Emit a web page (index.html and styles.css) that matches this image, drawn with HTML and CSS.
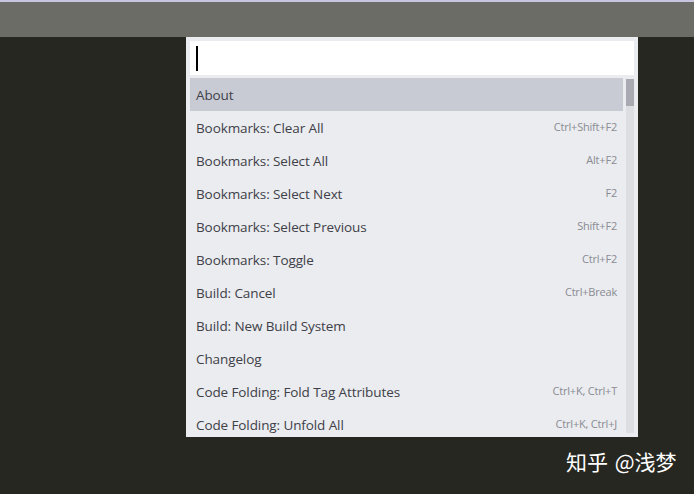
FILE: index.html
```html
<!DOCTYPE html>
<html>
<head>
<meta charset="utf-8">
<link rel="stylesheet" href="styles.css">
</head>
<body>
<div class="topline"></div>
<div class="topbar"></div>
<div class="stage">
  <div class="palette">
    <div class="input"><span class="caret"></span></div>
    <div class="listwrap">
      <div class="list">
        <div class="row selected"><span class="name">About</span></div>
        <div class="row"><span class="name">Bookmarks: Clear All</span><span class="key">Ctrl+Shift+F2</span></div>
        <div class="row"><span class="name">Bookmarks: Select All</span><span class="key">Alt+F2</span></div>
        <div class="row"><span class="name">Bookmarks: Select Next</span><span class="key">F2</span></div>
        <div class="row"><span class="name">Bookmarks: Select Previous</span><span class="key">Shift+F2</span></div>
        <div class="row"><span class="name">Bookmarks: Toggle</span><span class="key">Ctrl+F2</span></div>
        <div class="row"><span class="name">Build: Cancel</span><span class="key">Ctrl+Break</span></div>
        <div class="row"><span class="name">Build: New Build System</span></div>
        <div class="row"><span class="name">Changelog</span></div>
        <div class="row"><span class="name">Code Folding: Fold Tag Attributes</span><span class="key">Ctrl+K, Ctrl+T</span></div>
        <div class="row"><span class="name">Code Folding: Unfold All</span><span class="key">Ctrl+K, Ctrl+J</span></div>
      </div>
      <div class="scrollbar"><div class="thumb"></div></div>
    </div>
  </div>
  <div class="watermark">知乎 @浅梦</div>
</div>
</body>
</html>
```
FILE: styles.css
```css
html, body {
  margin: 0;
  padding: 0;
  background: #272722;
  width: 694px;
  height: 494px;
  overflow: hidden;
  font-family: "Open Sans", "Noto Sans", "Noto Sans CJK SC", sans-serif;
}
.topline {
  height: 2px;
  background: #c6c4df;
}
.topbar {
  height: 35px;
  background: #6b6c65;
}
.stage {
  position: relative;
  height: 457px;
}
.palette {
  margin-left: 186px;
  width: 444px;
  height: 392px;
  padding: 4px 4px 4px 4px;
  background: #eaecef;
  display: flex;
  flex-direction: column;
  gap: 3px;
  overflow: hidden;
}
.input {
  height: 34px;
  background: #ffffff;
  flex: none;
  display: flex;
  align-items: center;
  padding-left: 6px;
}
.caret {
  width: 2px;
  height: 25px;
  background: #000;
}
.listwrap {
  display: flex;
  gap: 3px;
  flex: 1;
  min-height: 0;
}
.list {
  flex: 1;
  display: flex;
  flex-direction: column;
}
.row {
  flex: none;
  height: 33px;
  display: flex;
  align-items: center;
  justify-content: space-between;
  padding: 0 6px 0 6px;
  color: #404048;
}
.row.selected {
  background: #c8cbd4;
}
.name {
  font-size: 13.5px;
  letter-spacing: -0.1px;
}
.key {
  font-size: 11px;
  color: #8b8b93;
  margin-top: -2px;
  letter-spacing: -0.2px;
}
.scrollbar {
  width: 8px;
  flex: none;
  background: #dcdee1;
  margin-top: 1px;
}
.thumb {
  height: 27px;
  background: #a9a9b1;
}
.watermark {
  position: absolute;
  left: 566px;
  top: 409px;
  color: #ffffff;
  font-size: 21px;
  font-family: "Noto Sans CJK SC", sans-serif;
  word-spacing: 2px;
}
```
